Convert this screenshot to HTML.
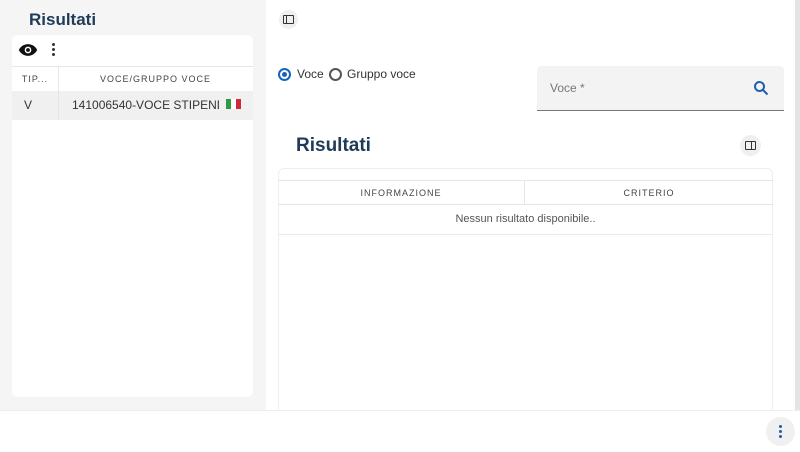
<!DOCTYPE html>
<html><head><style>
*{box-sizing:border-box;margin:0;padding:0}
body{width:800px;height:452px;overflow:hidden;font-family:"Liberation Sans",Arial,sans-serif;background:#fff;position:relative;color:#333}
.abs{position:absolute}
.left{left:0;top:0;width:266px;height:410px;background:#f5f5f5}
.h1{font-size:17px;font-weight:bold;color:#1f3b57}
.card{background:#fff;border-radius:6px}
.th{font-size:9px;letter-spacing:1px;color:#444;text-align:center}
</style></head><body>
<div class="abs left"></div>
<div class="abs h1" style="left:29px;top:10px">Risultati</div>
<div class="abs card" style="left:12px;top:35px;width:241px;height:362px"></div>
<svg class="abs" style="left:18px;top:43px" width="20" height="14" viewBox="0 0 24 16"><path d="M12 1C7 1 3 4 1 8c2 4 6 7 11 7s9-3 11-7c-2-4-6-7-11-7z" fill="#111"/><circle cx="12" cy="8" r="4" fill="#fff"/><circle cx="12" cy="8" r="2.3" fill="#111"/></svg>
<div class="abs" style="left:52px;top:43px;width:3px"><div style="width:3px;height:3px;background:#333;border-radius:50%;margin-bottom:2px"></div><div style="width:3px;height:3px;background:#333;border-radius:50%;margin-bottom:2px"></div><div style="width:3px;height:3px;background:#333;border-radius:50%"></div></div>
<div class="abs" style="left:12px;top:66px;width:241px;height:1px;background:#e6e6e6"></div>
<div class="abs" style="left:58px;top:66px;width:1px;height:54px;background:#e6e6e6"></div>
<div class="abs th" style="left:12px;top:74px;width:46px">TIP...</div>
<div class="abs th" style="left:58px;top:74px;width:195px">VOCE/GRUPPO VOCE</div>
<div class="abs" style="left:12px;top:91px;width:241px;height:29px;background:#f0f0f0"></div>
<div class="abs" style="left:58px;top:91px;width:1px;height:29px;background:#e4e4e4"></div>
<div class="abs" style="left:24px;top:98px;font-size:12px">V</div>
<div class="abs" style="left:72px;top:98px;font-size:12px;width:147px;overflow:hidden;white-space:nowrap">141006540-VOCE STIPENDIALE</div>
<div class="abs" style="left:226px;top:99px;width:15px;height:10px;display:flex"><i style="flex:1;background:#2e9a45"></i><i style="flex:1;background:#fff"></i><i style="flex:1;background:#cf2b37"></i></div>
<div class="abs" style="left:279px;top:10px;width:19px;height:19px;border-radius:50%;background:#efefef"></div>
<div class="abs" style="left:283px;top:15px;width:11px;height:9px;border:1.5px solid #333;border-radius:1px"><div style="width:3px;height:100%;border-right:1.5px solid #333"></div></div>
<div class="abs" style="left:278px;top:68px;width:13px;height:13px;border:2px solid #1565c0;border-radius:50%"><div style="margin:2px;width:5px;height:5px;background:#1565c0;border-radius:50%"></div></div>
<div class="abs" style="left:297px;top:67px;font-size:12px">Voce</div>
<div class="abs" style="left:329px;top:68px;width:13px;height:13px;border:2px solid #555;border-radius:50%"></div>
<div class="abs" style="left:347px;top:67px;font-size:12px">Gruppo voce</div>
<div class="abs" style="left:537px;top:66px;width:247px;height:45px;background:#f3f3f3;border-radius:4px 4px 0 0;border-bottom:1px solid #777"></div>
<div class="abs" style="left:550px;top:81px;font-size:12px;color:#777">Voce *</div>
<svg class="abs" style="left:753px;top:80px" width="16" height="16" viewBox="0 0 16 16"><circle cx="6.5" cy="6.5" r="4.5" fill="none" stroke="#1f5fa8" stroke-width="2"/><path d="M10 10l4.5 4.5" stroke="#1f5fa8" stroke-width="2"/></svg>
<div class="abs h1" style="left:296px;top:135px;font-size:19px">Risultati</div>
<div class="abs" style="left:740px;top:135px;width:21px;height:21px;border-radius:50%;background:#efefef"></div>
<div class="abs" style="left:745px;top:141px;width:11px;height:9px;border:1.5px solid #333;border-radius:1px"><div style="width:6px;height:100%;border-right:1.5px solid #333"></div></div>
<div class="abs" style="left:278px;top:168px;width:495px;height:250px;border:1px solid #eee;border-radius:6px"></div>
<div class="abs" style="left:278px;top:180px;width:495px;height:1px;background:#e6e6e6"></div>
<div class="abs" style="left:278px;top:204px;width:495px;height:1px;background:#e6e6e6"></div>
<div class="abs" style="left:278px;top:234px;width:495px;height:1px;background:#eaeaea"></div>
<div class="abs" style="left:524px;top:180px;width:1px;height:24px;background:#e6e6e6"></div>
<div class="abs th" style="left:278px;top:188px;width:246px">INFORMAZIONE</div>
<div class="abs th" style="left:525px;top:188px;width:248px">CRITERIO</div>
<div class="abs" style="left:278px;top:213px;width:495px;text-align:center;font-size:11px;color:#555">Nessun risultato disponibile..</div>
<div class="abs" style="left:795px;top:0;width:5px;height:410px;background:#e4e4e4"></div>
<div class="abs" style="left:0;top:410px;width:800px;height:42px;background:#fff;border-top:1px solid #eee"></div>
<div class="abs" style="left:766px;top:417px;width:29px;height:29px;border-radius:50%;background:#f0f0f0"></div>
<div class="abs" style="left:779px;top:425px;width:3px"><div style="width:3px;height:3px;background:#1f5fa8;border-radius:50%;margin-bottom:2px"></div><div style="width:3px;height:3px;background:#1f5fa8;border-radius:50%;margin-bottom:2px"></div><div style="width:3px;height:3px;background:#1f5fa8;border-radius:50%"></div></div>
</body></html>
